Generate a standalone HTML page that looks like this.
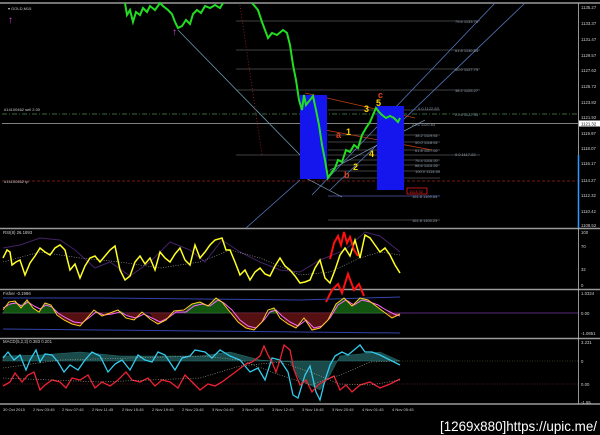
<!DOCTYPE html>
<html><head><meta charset="utf-8"><style>
html,body{margin:0;padding:0;background:#000;width:600px;height:435px;overflow:hidden}
svg{display:block}
text{font-family:"Liberation Sans",sans-serif}
</style></head><body>
<svg width="600" height="435" viewBox="0 0 600 435" xmlns="http://www.w3.org/2000/svg">
<rect width="600" height="435" fill="#000"/>
<g stroke="#9a9a9a" stroke-width="1.5">
<line x1="0" y1="3" x2="600" y2="3"/>
<line x1="0" y1="228.5" x2="600" y2="228.5"/>
<line x1="0" y1="289.5" x2="600" y2="289.5"/>
<line x1="0" y1="338.5" x2="600" y2="338.5"/>
<line x1="0" y1="404" x2="600" y2="404"/>
</g>
<line x1="578.5" y1="3" x2="578.5" y2="404" stroke="#bbb" stroke-width="0.8"/>
<line x1="578.5" y1="155" x2="578.5" y2="228" stroke="#39f" stroke-width="1.5"/>
<g stroke="#555" stroke-width="0.8">
<line x1="236" y1="21" x2="480" y2="21"/><line x1="236" y1="50" x2="480" y2="50"/>
<line x1="236" y1="69" x2="480" y2="69"/><line x1="236" y1="90" x2="480" y2="90"/>
<line x1="328" y1="110" x2="440" y2="110"/><line x1="328" y1="135" x2="440" y2="135"/>
<line x1="328" y1="142" x2="440" y2="142"/><line x1="328" y1="150" x2="440" y2="150"/>
<line x1="236" y1="155" x2="480" y2="155"/><line x1="328" y1="160" x2="440" y2="160"/>
<line x1="328" y1="165" x2="440" y2="165"/><line x1="328" y1="171" x2="440" y2="171"/>
<line x1="328" y1="178" x2="440" y2="178"/><line x1="328" y1="220" x2="440" y2="220"/>
</g>
<line x1="328" y1="196" x2="440" y2="196" stroke="#336" stroke-width="1.2"/>
<line x1="2" y1="123.5" x2="578" y2="123.5" stroke="#aaa" stroke-width="0.8"/>
<line x1="2" y1="114" x2="578" y2="114" stroke="#4a8a4a" stroke-width="0.8" stroke-dasharray="5,2,1,2"/>
<line x1="2" y1="181" x2="578" y2="181" stroke="#a02020" stroke-width="0.8" stroke-dasharray="3,2"/>
<line x1="178" y1="30" x2="300" y2="155" stroke="#6a9ab0" stroke-width="0.8"/>
<line x1="240" y1="5" x2="262" y2="155" stroke="#a02020" stroke-width="0.8" stroke-dasharray="1,2"/>
<g stroke="#5577bb" stroke-width="0.8">
<line x1="312" y1="195" x2="495" y2="3"/><line x1="330" y1="190" x2="525" y2="3"/>
<line x1="246" y1="228" x2="300" y2="180"/>
</g>
<line x1="330" y1="170" x2="425" y2="120" stroke="#88aacc" stroke-width="0.7"/>
<line x1="300" y1="175" x2="342" y2="197" stroke="#88aacc" stroke-width="0.7"/>
<line x1="305" y1="93" x2="415" y2="118" stroke="#c04010" stroke-width="0.8"/>
<line x1="325" y1="130" x2="432" y2="150" stroke="#c04010" stroke-width="0.8"/>
<rect x="300" y="95" width="27" height="84" fill="#1515ee"/>
<rect x="377" y="106" width="27" height="84" fill="#1515ee"/>
<rect x="407" y="188" width="20" height="6" fill="none" stroke="#e02020" stroke-width="0.8"/>
<text x="409" y="193" font-size="4" fill="#e02020">1113.32</text>
<polyline fill="none" stroke="#22dd22" stroke-width="2" points="125,3 127,15 130,10 133,22 136,12 140,15 143,8 147,12 150,6 155,10 160,3 163,6 168,10 172,14 175,22 178,28 182,26 186,20 190,24 193,14 197,10 201,13 205,6 210,8 215,5 220,8 223,3"/>
<polyline fill="none" stroke="#22dd22" stroke-width="2" points="252,3 258,10 262,22 265,30 268,38 272,33 277,35 283,30 287,33 290,45 293,65 296,80 299,100 302,110 304,95 306,105 310,100 313,96 316,110 319,125 322,145 325,160 328,178 332,172 335,168 338,160 342,162 346,150 350,152 354,145 358,148 362,135 366,128 370,122 373,115 376,108 379,112 382,115 386,118 390,116 394,118 398,122 400,118"/>
<g font-size="4" fill="#8899aa">
<text x="455" y="23">79.6 1133.78</text><text x="455" y="52">61.8 1130.84</text>
<text x="455" y="71">50.0 1127.75</text><text x="455" y="92">38.2 1125.27</text>
<text x="418" y="110">0.0 1122.83</text><text x="455" y="116">23.6 1122.33</text>
<text x="412" y="126">23.6 1120.83</text><text x="415" y="137">38.2 1119.61</text>
<text x="415" y="144">50.0 1118.61</text><text x="415" y="152">61.8 1117.62</text>
<text x="455" y="156">0.0 1117.22</text><text x="415" y="162">76.4 1116.20</text>
<text x="415" y="167">88.6 1115.26</text><text x="415" y="173">100.0 1114.40</text>
<text x="412" y="198">161.8 1109.64</text><text x="412" y="222">161.8 1105.23</text>
<text x="4" y="111" fill="#ccc">#14100462 sell 2.00</text>
<text x="4" y="183" fill="#ccc">#14100462 tp</text>
<text x="8" y="10" fill="#ccc">▾ GOLD,M15</text>
</g>
<g font-size="9" font-weight="bold">
<text x="378" y="98" fill="#e04020">c</text><text x="376" y="106" fill="#ffd700">5</text>
<text x="364" y="112" fill="#ffd700">3</text><text x="346" y="135" fill="#ffd700">1</text>
<text x="336" y="138" fill="#e04020">a</text><text x="369" y="157" fill="#ffd700">4</text>
<text x="353" y="170" fill="#ffd700">2</text><text x="344" y="178" fill="#e04020">b</text>
</g>
<text x="8" y="23" font-size="10" fill="#e040e0">↑</text>
<text x="172" y="35" font-size="10" fill="#e040e0">↑</text>
<g font-size="4.3" fill="#ccc">
<text x="581" y="9">1135.27</text><text x="581" y="25">1133.37</text><text x="581" y="41">1131.47</text>
<text x="581" y="57">1129.57</text><text x="581" y="72">1127.62</text><text x="581" y="88">1125.72</text>
<text x="581" y="104">1123.82</text><text x="581" y="119">1121.92</text><text x="581" y="135">1119.97</text>
<text x="581" y="150">1118.07</text><text x="581" y="165">1116.17</text><text x="581" y="182">1114.27</text>
<text x="581" y="197">1112.32</text><text x="581" y="213">1110.42</text><text x="581" y="227">1108.52</text>
</g>
<rect x="579" y="120.5" width="21" height="6" fill="#fff"/>
<text x="581" y="125.5" font-size="4.3" fill="#000">1121.32</text>
<text x="3" y="234" font-size="4.3" fill="#ccc">RSI(8) 26.1893</text>
<polyline fill="none" stroke="#442266" stroke-width="1" points="3,248 20,245 40,238 60,240 75,250 95,268 110,262 130,276 150,262 170,242 190,250 205,262 222,240 240,252 260,262 280,270 300,272 320,260 345,250 365,232 380,236 400,252"/>
<polyline fill="none" stroke="#aaa" stroke-width="0.6" stroke-dasharray="1,1.5" points="3,262 40,252 80,258 120,262 160,268 200,262 230,250 260,258 300,275 330,272 360,258 380,252 400,255"/>
<polyline fill="none" stroke="#ffff22" stroke-width="1.5" points="3,258 7,250 10,252 12,265 16,262 20,260 25,275 30,263 35,256 40,248 45,252 50,255 55,248 60,245 65,250 70,270 75,264 80,278 85,266 90,258 95,256 100,262 105,256 110,250 115,246 120,270 125,280 130,276 135,262 140,256 145,264 150,258 155,270 160,252 165,258 170,262 175,254 180,248 185,260 190,265 195,245 200,258 205,252 210,245 215,240 222,238 226,250 230,250 235,262 240,275 245,270 250,280 255,272 260,268 265,274 270,276 275,266 280,258 285,266 290,270 295,276 300,283 305,282 310,280 315,268 320,260 325,278 330,283 335,270 340,255 345,248 350,256 355,240 360,258 365,235 370,238 375,245 380,252 385,248 390,255 395,265 400,273"/>
<polyline fill="none" stroke="#ff1010" stroke-width="2" points="330,259 334,243 338,236 341,245 344,232 347,243 350,237 354,250 358,256"/>
<polyline fill="none" stroke="#ff1010" stroke-width="2" points="326,302 332,290 338,284 342,293 348,274 354,290 359,284 364,296"/>
<g font-size="4.3" fill="#ccc"><text x="581" y="234">100</text><text x="581" y="248">70</text><text x="581" y="271">32</text><text x="581" y="287">0</text></g>
<text x="3" y="295" font-size="4.3" fill="#ccc">Fisher -0.1996</text>
<line x1="2" y1="313" x2="578" y2="313" stroke="#5a2a7a" stroke-width="1"/>
<polyline fill="none" stroke="#3344aa" stroke-width="1" points="3,298 100,298 200,299 300,300 400,297"/>
<polyline fill="none" stroke="#3344aa" stroke-width="1" points="3,329 100,330 200,331 300,332 400,333"/>
<path d="M3,313 L8,305 15,302 20,306 27,300 33,308 39,312 45,303 51,305 57,313 Z M94,313 L96,312 100,313 Z M118,313 L120,311 124,313 Z M184,313 L192,304 200,302 208,306 216,298 222,302 230,312 232,313 Z M268,313 L274,308 278,313 Z M333,313 L336,304 344,298 352,306 360,298 368,300 376,306 384,312 386,313 Z" fill="#115511" stroke="#2a8a2a" stroke-width="0.5"/>
<path d="M57,313 L64,320 72,324 80,326 88,317 92,313 Z M102,313 L110,314 116,313 Z M126,313 L134,320 142,313 Z M150,313 L158,324 166,320 172,313 Z M232,313 L238,322 246,328 254,330 262,322 266,313 Z M280,313 L288,324 296,328 304,318 312,330 320,328 328,320 332,313 Z M388,313 L392,318 400,314 Z" fill="#551111" stroke="#8a2a2a" stroke-width="0.5"/>
<polyline fill="none" stroke="#ff66ff" stroke-width="1" points="3,308 10,304 16,303 22,306 28,302 34,306 40,309 46,305 52,307 58,313 66,318 74,322 82,323 90,317 96,312 104,315 112,314 120,312 128,316 136,318 144,314 152,318 160,322 168,318 176,312 186,312 194,306 202,304 210,306 218,300 224,303 232,310 240,320 248,326 256,328 264,320 270,312 276,310 282,316 290,322 298,326 306,320 314,328 322,326 330,318 338,305 346,300 354,305 362,300 370,302 378,305 386,310 394,314 400,316"/>
<polyline fill="none" stroke="#ffcc22" stroke-width="1" points="3,310 9,302 15,301 21,308 27,300 33,308 39,312 45,303 51,305 57,315 64,320 72,324 80,326 88,317 94,310 102,316 110,313 118,310 126,318 134,320 142,312 150,319 158,324 166,320 174,311 184,310 192,304 200,302 208,306 216,298 222,302 230,312 238,322 246,328 254,330 262,322 268,310 274,308 280,318 288,324 296,328 304,318 312,330 320,328 328,320 336,304 344,298 352,306 360,298 368,300 376,306 384,312 392,318 400,314"/>
<g font-size="4.3" fill="#ccc"><text x="581" y="295">1.0324</text><text x="581" y="315">0.00</text><text x="581" y="335">-1.0851</text></g>
<text x="3" y="343" font-size="4.3" fill="#ccc">MACD(5,2,3) 0.383 0.201</text>
<line x1="2" y1="361" x2="578" y2="361" stroke="#664" stroke-width="0.6" stroke-dasharray="1,1.5"/>
<line x1="2" y1="384" x2="578" y2="384" stroke="#a03030" stroke-width="0.6" stroke-dasharray="1,1.5"/>
<path d="M3,361 L3,356 40,355 80,352 120,356 160,356 200,356 230,352 260,360 290,362 300,380 320,390 330,375 340,356 380,352 400,361 Z" fill="#1a4a4a" stroke="#3aa0a0" stroke-width="0.3"/>
<polyline fill="none" stroke="#33ccee" stroke-width="1.3" points="3,358 8,352 14,360 20,355 26,370 30,360 36,350 40,362 45,354 52,355 58,362 64,372 70,365 78,370 85,360 92,352 100,356 108,372 115,364 122,360 130,370 138,355 145,360 152,362 158,352 165,355 175,370 182,358 190,356 195,350 205,352 212,358 220,350 230,356 240,360 250,372 258,368 265,380 272,358 280,360 288,372 293,395 298,398 305,375 310,366 316,392 320,400 325,380 330,365 335,356 342,352 348,355 354,350 360,345 365,352 372,352 380,355 390,360 400,365"/>
<polyline fill="none" stroke="#ee2233" stroke-width="1.3" points="3,386 10,382 15,373 22,382 28,375 34,372 40,390 45,385 52,380 60,382 66,388 72,378 80,380 88,375 95,388 102,382 110,386 118,380 126,372 132,380 140,382 148,378 155,386 162,380 170,382 178,388 185,375 192,382 200,390 208,384 215,386 222,382 230,376 238,370 246,364 252,362 260,356 264,346 268,355 272,362 276,372 280,360 284,345 290,350 294,370 300,385 306,380 312,392 318,385 326,380 334,376 340,390 346,385 352,392 360,385 370,382 380,388 390,384 400,379"/>
<polyline fill="none" stroke="#aa9" stroke-width="0.6" stroke-dasharray="1,1.5" points="3,368 60,360 130,358 200,356 240,360 280,375 310,385 340,375 370,362 400,361"/>
<polyline fill="none" stroke="#aa9" stroke-width="0.6" stroke-dasharray="1,1.5" points="3,378 100,382 200,378 240,366 280,362 310,372 340,384 370,385 400,380"/>
<g font-size="4.3" fill="#ccc"><text x="581" y="344">3.231</text><text x="581" y="363">0</text><text x="581" y="386">0.00</text><text x="581" y="404">-1.55</text></g>
<g font-size="4" fill="#ccc">
<text x="3" y="411">30 Oct 2015</text><text x="33" y="411">2 Nov 03:45</text><text x="62" y="411">2 Nov 07:45</text>
<text x="92" y="411">2 Nov 11:45</text><text x="122" y="411">2 Nov 15:45</text><text x="152" y="411">2 Nov 19:45</text>
<text x="182" y="411">2 Nov 23:45</text><text x="212" y="411">3 Nov 04:45</text><text x="242" y="411">3 Nov 08:45</text>
<text x="272" y="411">3 Nov 12:45</text><text x="302" y="411">3 Nov 16:45</text><text x="332" y="411">3 Nov 20:45</text>
<text x="362" y="411">4 Nov 01:45</text><text x="392" y="411">4 Nov 05:45</text>
</g>
<text x="597" y="431" font-size="14" fill="#fff" text-anchor="end" textLength="157" lengthAdjust="spacingAndGlyphs">[1269x880]https://upic.me/</text>
</svg>
</body></html>
